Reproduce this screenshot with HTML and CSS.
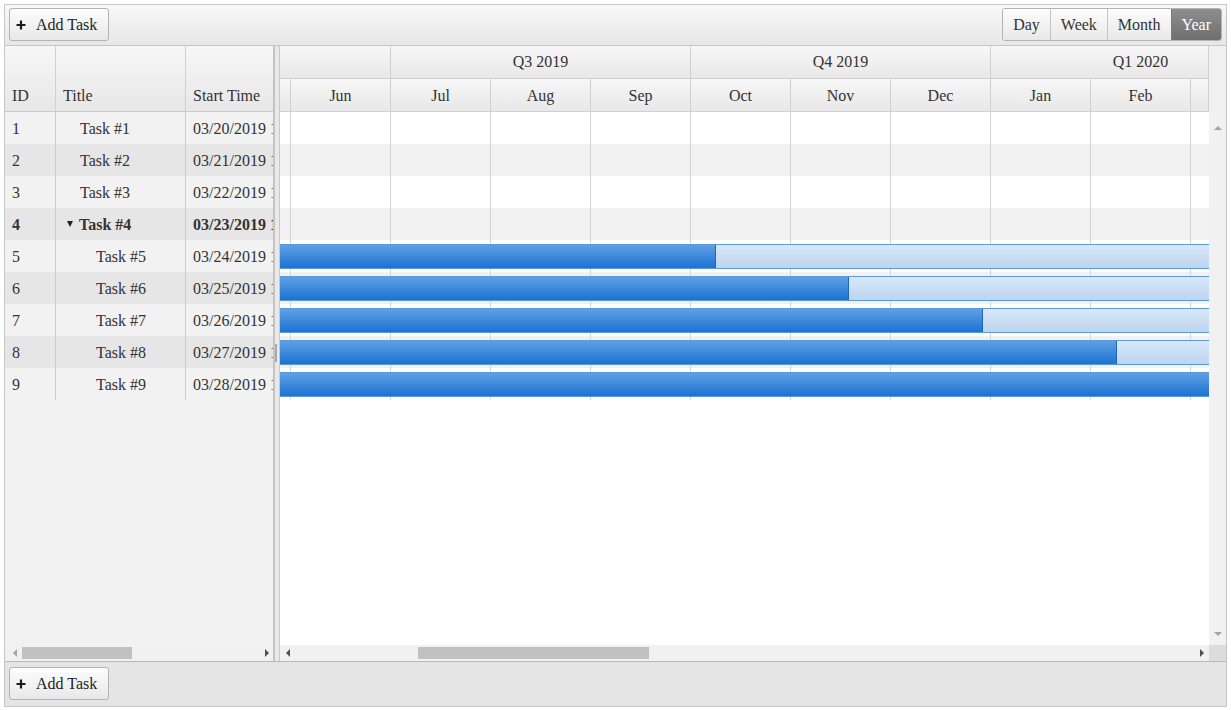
FILE: index.html
```html
<!DOCTYPE html>
<html lang="en">
<head>
  <meta charset="UTF-8" />
  <title>Gantt</title>
  <link rel="stylesheet" href="styles.css">
</head>
<body>

<div class="gantt">
  <div class="toolbar">
    <button class="btn"><svg class="plus" width="10" height="10" viewBox="0 0 10 10"><path d="M5 0.5v9M0.5 5h9" stroke="#1a1a1a" stroke-width="2.2"/></svg>Add Task</button>
    <div class="views">
      <button class="view">Day</button>
      <button class="view">Week</button>
      <button class="view">Month</button>
      <button class="view active">Year</button>
    </div>
  </div>

  <div class="main">
    <div class="treelist">
      <div class="tl-head">
        <div class="th">ID</div>
        <div class="th">Title</div>
        <div class="th">Start Time</div>
      </div>
      <div class="tl-body">
        <div class="tr"><div class="td">1</div><div class="td title">Task #1</div><div class="td">03/20/2019 12:00 AM</div></div>
        <div class="tr"><div class="td">2</div><div class="td title">Task #2</div><div class="td">03/21/2019 12:00 AM</div></div>
        <div class="tr"><div class="td">3</div><div class="td title">Task #3</div><div class="td">03/22/2019 12:00 AM</div></div>
        <div class="tr bold"><div class="td">4</div><div class="td parent"><span class="caret"></span>Task #4</div><div class="td">03/23/2019 12:00 AM</div></div>
        <div class="tr"><div class="td">5</div><div class="td child">Task #5</div><div class="td">03/24/2019 12:00 AM</div></div>
        <div class="tr"><div class="td">6</div><div class="td child">Task #6</div><div class="td">03/25/2019 12:00 AM</div></div>
        <div class="tr"><div class="td">7</div><div class="td child">Task #7</div><div class="td">03/26/2019 12:00 AM</div></div>
        <div class="tr"><div class="td">8</div><div class="td child">Task #8</div><div class="td">03/27/2019 12:00 AM</div></div>
        <div class="tr"><div class="td">9</div><div class="td child">Task #9</div><div class="td">03/28/2019 12:00 AM</div></div>
      </div>
      <div class="hscroll tree-scroll">
        <span class="arr-l off"></span>
        <span class="thumb"></span>
        <span class="fill"></span>
        <span class="arr-r"></span>
      </div>
    </div>

    <div class="splitter"><span class="split-thumb"></span></div>

    <div class="timeline">
      <div class="chart-col">
        <div class="time-head">
          <div class="track">
            <div class="hrow">
              <div class="hcell q first"></div>
              <div class="hcell q">Q3 2019</div>
              <div class="hcell q">Q4 2019</div>
              <div class="hcell q">Q1 2020</div>
            </div>
            <div class="hrow">
              <div class="hcell"></div>
              <div class="hcell">Jun</div>
              <div class="hcell">Jul</div>
              <div class="hcell">Aug</div>
              <div class="hcell">Sep</div>
              <div class="hcell">Oct</div>
              <div class="hcell">Nov</div>
              <div class="hcell">Dec</div>
              <div class="hcell">Jan</div>
              <div class="hcell">Feb</div>
              <div class="hcell"></div>
            </div>
          </div>
        </div>

        <div class="chart">
          <div class="crow"></div>
          <div class="crow"></div>
          <div class="crow"></div>
          <div class="crow"></div>
          <div class="crow"><div class="bar"><div class="done" style="width: 436px"></div></div></div>
          <div class="crow"><div class="bar"><div class="done" style="width: 569px"></div></div></div>
          <div class="crow"><div class="bar"><div class="done" style="width: 703px"></div></div></div>
          <div class="crow"><div class="bar"><div class="done" style="width: 837px"></div></div></div>
          <div class="crow"><div class="bar"><div class="done full" style="width: 100%"></div></div></div>
        </div>

        <div class="hscroll chart-scroll">
          <span class="arr-l"></span>
          <span class="thumb"></span>
          <span class="fill"></span>
          <span class="arr-r"></span>
        </div>
      </div>

      <div class="vcol">
        <div class="vtrack">
          <span class="arr-u"></span>
          <span class="arr-d"></span>
        </div>
        <div class="corner"></div>
      </div>
    </div>
  </div>

  <div class="footer">
    <button class="btn"><svg class="plus" width="10" height="10" viewBox="0 0 10 10"><path d="M5 0.5v9M0.5 5h9" stroke="#1a1a1a" stroke-width="2.2"/></svg>Add Task</button>
  </div>
</div>

</body>
</html>
```

FILE: styles.css
```css
* {
  box-sizing: border-box;
}

body {
  margin: 4px;
  background: #fff;
  font-family: "Liberation Serif", "Times New Roman", serif;
  font-size: 16px;
  color: #333;
}

.gantt {
  width: 1223px;
  height: 703px;
  border: 1px solid #c6c6c6;
  display: flex;
  flex-direction: column;
}

/* toolbar */
.toolbar {
  flex: none;
  height: 41px;
  padding: 3px 4px 0;
  border-bottom: 1px solid #c6c6c6;
  background: linear-gradient(#f8f8f8, #e7e7e7);
  display: flex;
  justify-content: space-between;
  align-items: flex-start;
}

.btn {
  width: 100px;
  height: 33px;
  padding: 0 0 0 6px;
  border: 1px solid #b3b3b3;
  border-radius: 3px;
  background: linear-gradient(#fdfdfd, #e8e8e8);
  font: inherit;
  color: #222;
  display: flex;
  align-items: center;
  gap: 10px;
}

.plus {
  flex: none;
}

.views {
  height: 33px;
  display: flex;
  border: 1px solid #b3b3b3;
  border-radius: 3px;
  overflow: hidden;
}

.view {
  padding: 0 10px;
  border: none;
  border-left: 1px solid #c4c4c4;
  background: linear-gradient(#fdfdfd, #e8e8e8);
  font: inherit;
  color: #333;
}

.view:first-child {
  border-left: none;
}

.view.active {
  background: linear-gradient(#8e8e8e, #6f6f6f);
  border-left-color: #7a7a7a;
  color: #fff;
}

/* main area */
.main {
  flex: none;
  height: 615px;
  display: flex;
}

.treelist {
  width: 268px;
  flex: none;
  display: flex;
  flex-direction: column;
  overflow: hidden;
  background: #f2f2f2;
}

.tl-head,
.tr {
  display: grid;
  grid-template-columns: 51px 130px 150px;
}

.tl-head {
  flex: none;
  height: 66px;
  border-bottom: 1px solid #c9c9c9;
  background: linear-gradient(#f7f7f7, #e7e7e7);
}

.th {
  padding: 0 7px 6px;
  border-right: 1px solid #d0d0d0;
  display: flex;
  align-items: flex-end;
  white-space: nowrap;
}

.tl-body {
  flex: 1;
}

.tr {
  height: 32px;
}

.tr:nth-child(even) {
  background: #e6e6e6;
}

.tr.bold {
  font-weight: bold;
}

.td {
  padding: 2px 7px 0;
  border-right: 1px solid #cbcbcb;
  line-height: 30px;
  white-space: nowrap;
}

.td.title {
  padding-left: 24px;
}

.td.child {
  padding-left: 40px;
}

.td.parent {
  padding-left: 11px;
}

.caret {
  display: inline-block;
  width: 0;
  height: 0;
  margin-right: 6px;
  vertical-align: 3px;
  border-left: 3.5px solid transparent;
  border-right: 3.5px solid transparent;
  border-top: 6px solid #222;
}

/* scrollbars */
.hscroll {
  flex: none;
  height: 16px;
  background: #f1f1f1;
  display: flex;
  align-items: center;
}

.hscroll .fill {
  flex: 1;
}

.thumb {
  height: 12px;
  background: #c1c1c1;
}

.arr-l,
.arr-r {
  width: 0;
  height: 0;
  border-top: 4px solid transparent;
  border-bottom: 4px solid transparent;
}

.arr-l {
  border-right: 4px solid #505050;
}

.arr-r {
  border-left: 4px solid #505050;
}

.arr-l.off {
  border-right-color: #a3a3a3;
}

.tree-scroll .arr-l {
  margin-left: 8px;
}

.tree-scroll .thumb {
  width: 110px;
  margin-left: 5px;
}

.tree-scroll .arr-r {
  margin-right: 4px;
}

.chart-scroll .arr-l {
  margin-left: 6px;
}

.chart-scroll .thumb {
  width: 231px;
  margin-left: 128px;
}

.chart-scroll .arr-r {
  margin-right: 5px;
}

.splitter {
  width: 7px;
  flex: none;
  background: #e9e9e9;
  border-left: 2px solid #c3c3c3;
  border-right: 1px solid #c9c9c9;
}

.split-thumb {
  display: block;
  width: 2px;
  height: 18px;
  margin-top: 298px;
  background: #a9a9a9;
}

/* timeline */
.timeline {
  flex: 1;
  display: flex;
}

.chart-col {
  width: 929px;
  flex: none;
  display: flex;
  flex-direction: column;
}

.time-head {
  flex: none;
  height: 66px;
  overflow: hidden;
  border-right: 1px solid #d0d0d0;
}

.track {
  width: 1100px;
  margin-left: -90px;
}

.hrow {
  height: 33px;
  display: flex;
  border-bottom: 1px solid #d0d0d0;
}

.hcell {
  width: 100px;
  flex: none;
  padding-top: 2px;
  border-left: 1px solid #d0d0d0;
  background: linear-gradient(#f7f7f7, #e8e8e8);
  text-align: center;
  line-height: 30px;
}

.hcell.q {
  width: 300px;
  padding-top: 0;
  line-height: 32px;
}

.hcell.q.first {
  width: 200px;
}

.chart {
  flex: 1;
  overflow: hidden;
  background: #fff;
}

.crow {
  height: 32px;
  padding-top: 4px;
  background: linear-gradient(to right, #d4d4d4 1px, transparent 1px) 10px 0 / 100px 100% repeat-x, #fff;
}

.crow:nth-child(even) {
  background: linear-gradient(to right, #d4d4d4 1px, transparent 1px) 10px 0 / 100px 100% repeat-x, #f2f2f2;
}

.bar {
  height: 25px;
  display: flex;
  border-top: 1px solid #5c9bdb;
  border-bottom: 1px solid #5c9bdb;
  background: linear-gradient(#d8e7f8, #bcd5f0);
}

.done {
  height: 100%;
  border-right: 1px solid #1c68bb;
  background: linear-gradient(#5fa0e4, #1b73d2);
}

.done.full {
  border-right: none;
}

.vcol {
  width: 17px;
  flex: none;
  display: flex;
  flex-direction: column;
}

.vtrack {
  flex: 1;
  background: #f1f1f1;
  display: flex;
  flex-direction: column;
  justify-content: space-between;
  align-items: center;
  padding: 80px 0 9px;
}

.arr-u,
.arr-d {
  width: 0;
  height: 0;
  border-left: 4px solid transparent;
  border-right: 4px solid transparent;
}

.arr-u {
  border-bottom: 4px solid #a3a3a3;
}

.arr-d {
  border-top: 4px solid #a3a3a3;
}

.corner {
  flex: none;
  height: 16px;
  background: #dcdcdc;
}

/* footer */
.footer {
  flex: 1;
  padding: 5px 4px 0;
  border-top: 1px solid #b8b8b8;
  background: #e5e5e5;
}
```
